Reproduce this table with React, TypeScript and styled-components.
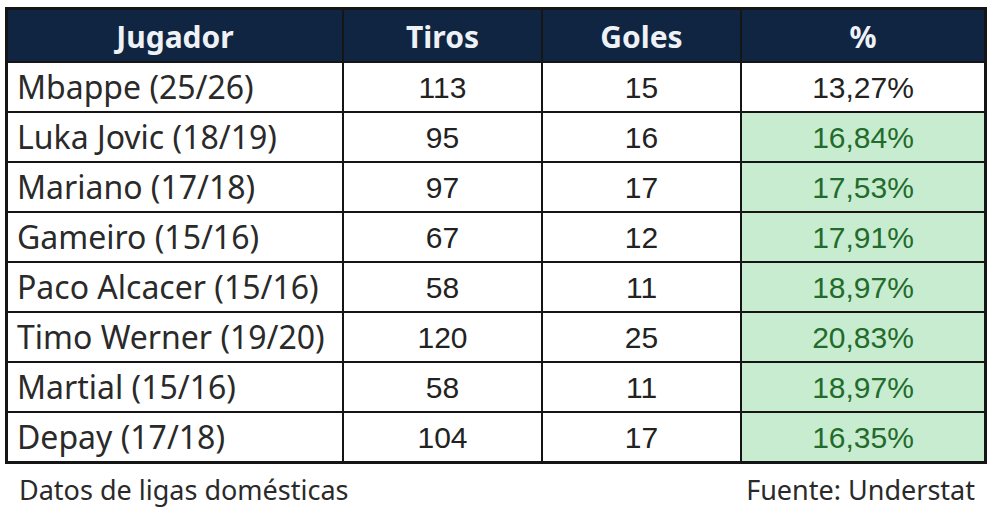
import React from "react";
import styled, { createGlobalStyle } from "styled-components";

const Global = createGlobalStyle`
  html, body { margin: 0; padding: 0; background: #ffffff; }
  body { width: 995px; height: 513px; overflow: hidden; }
`;

const Page = styled.div`
  padding: 7px 8px 0 5px;
  width: 995px;
  box-sizing: border-box;
`;

const Table = styled.div`
  display: grid;
  grid-template-columns: 334px 197px 197px 1fr;
  grid-template-rows: 51px repeat(8, 48px);
  gap: 2px;
  background: #151515;
  border: 3px solid #151515;
`;

const HeadCell = styled.div`
  background: #0f2541;
  color: #eef2f7;
  font-family: "Noto Sans", "Open Sans", sans-serif;
  font-weight: 700;
  font-size: 30px;
  line-height: 1;
  display: flex;
  align-items: center;
  justify-content: center;
  padding-top: 2px;
  box-sizing: border-box;
`;

const NameCell = styled.div`
  background: #ffffff;
  color: #2a2a2a;
  font-family: "Noto Sans", "Open Sans", sans-serif;
  font-size: 32px;
  line-height: 1;
  display: flex;
  align-items: center;
  padding: 0 0 0 9px;
  box-sizing: border-box;
  white-space: nowrap;
`;

const NumCell = styled.div<{ $good?: boolean }>`
  background: ${(p) => (p.$good ? "#c8ecd0" : "#ffffff")};
  color: ${(p) => (p.$good ? "#226b2c" : "#222222")};
  font-family: "Liberation Sans", Arial, sans-serif;
  font-size: 30px;
  line-height: 1;
  display: flex;
  align-items: center;
  justify-content: center;
  padding-top: 2px;
  box-sizing: border-box;
`;

const Footer = styled.div`
  display: flex;
  justify-content: space-between;
  padding: 7px 12px 0 14px;
  font-family: "Noto Sans", "Open Sans", sans-serif;
  font-size: 27px;
  color: #2a2a2a;
`;

const rows: [string, string, string, string, boolean][] = [
  ["Mbappe (25/26)", "113", "15", "13,27%", false],
  ["Luka Jovic (18/19)", "95", "16", "16,84%", true],
  ["Mariano (17/18)", "97", "17", "17,53%", true],
  ["Gameiro (15/16)", "67", "12", "17,91%", true],
  ["Paco Alcacer (15/16)", "58", "11", "18,97%", true],
  ["Timo Werner (19/20)", "120", "25", "20,83%", true],
  ["Martial (15/16)", "58", "11", "18,97%", true],
  ["Depay (17/18)", "104", "17", "16,35%", true],
];

export default function App() {
  return (
    <Page>
      <Global />
      <Table>
        <HeadCell>Jugador</HeadCell>
        <HeadCell>Tiros</HeadCell>
        <HeadCell>Goles</HeadCell>
        <HeadCell>%</HeadCell>
        {rows.map(([n, t, g, p, good]) => (
          <React.Fragment key={n}>
            <NameCell>{n}</NameCell>
            <NumCell>{t}</NumCell>
            <NumCell>{g}</NumCell>
            <NumCell $good={good}>{p}</NumCell>
          </React.Fragment>
        ))}
      </Table>
      <Footer>
        <span>Datos de ligas domésticas</span>
        <span>Fuente: Understat</span>
      </Footer>
    </Page>
  );
}
